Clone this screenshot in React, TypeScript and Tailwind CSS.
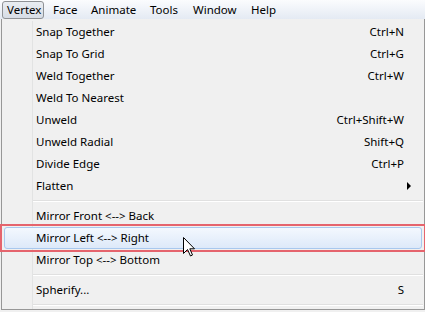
import React from "react";

type Item =
  | { kind: "item"; label: string; shortcut?: string; submenu?: boolean; active?: boolean }
  | { kind: "sep" };

const menuBar = [
  { label: "Face", w: "w-[38px]" },
  { label: "Animate", w: "w-[59px]" },
  { label: "Tools", w: "w-[43px]" },
  { label: "Window", w: "w-[58px]" },
  { label: "Help", w: "w-[40px]" },
];

const items: Item[] = [
  { kind: "item", label: "Snap Together", shortcut: "Ctrl+N" },
  { kind: "item", label: "Snap To Grid", shortcut: "Ctrl+G" },
  { kind: "item", label: "Weld Together", shortcut: "Ctrl+W" },
  { kind: "item", label: "Weld To Nearest" },
  { kind: "item", label: "Unweld", shortcut: "Ctrl+Shift+W" },
  { kind: "item", label: "Unweld Radial", shortcut: "Shift+Q" },
  { kind: "item", label: "Divide Edge", shortcut: "Ctrl+P" },
  { kind: "item", label: "Flatten", submenu: true },
  { kind: "sep" },
  { kind: "item", label: "Mirror Front <--> Back" },
  { kind: "item", label: "Mirror Left <--> Right", active: true },
  { kind: "item", label: "Mirror Top <--> Bottom" },
  { kind: "sep" },
  { kind: "item", label: "Spherify...", shortcut: "S" },
  { kind: "sep" },
];

function Cursor() {
  return (
    <svg
      className="absolute left-[183px] top-[237px]"
      width="13"
      height="20"
      viewBox="0 0 13 20"
    >
      <path
        d="M0.5 0.5 L0.5 16.5 L4.5 12.5 L7.5 19 L9.5 18 L6.8 11.8 L11.5 11.8 Z"
        fill="#fff"
        stroke="#000"
        strokeWidth="1"
        strokeLinejoin="miter"
      />
    </svg>
  );
}

export default function App() {
  return (
    <div
      className="relative h-[312px] w-[425px] overflow-hidden bg-[#f0f0f0] text-[11.5px] text-black"
      style={{ fontFamily: '"Noto Sans", "Open Sans", sans-serif' }}
    >
      <div className="flex h-[19px] items-center bg-gradient-to-b from-[#fbfcfe] to-[#e4eaf3] pl-[2px]">
        <div className="mr-[2px] flex h-[18px] w-[42px] items-center rounded-[3px] border border-[#8f9296] bg-gradient-to-b from-[#e9edf2] to-[#d7dde6] pl-[4px] leading-none">
          Vertex
        </div>
        {menuBar.map((m) => (
          <div key={m.label} className={`flex h-[18px] items-center pl-[7px] leading-none ${m.w}`}>
            {m.label}
          </div>
        ))}
      </div>

      <div className="ml-[1px] w-[424px] border border-t-0 border-[#979797] bg-[#f0f0f0] px-[1px] pt-[2px]">
        <div className="relative flex flex-col">
          <div className="absolute bottom-0 left-[29px] top-0 w-[2px] border-l border-[#e2e3e3]" />
          {items.map((it, i) =>
            it.kind === "sep" ? (
              <div key={i} className="flex h-[8px] items-center pl-[30px]">
                <div className="h-[2px] w-full border-t border-[#e0e0e0] border-b border-b-white" />
              </div>
            ) : (
              <div
                key={i}
                className={
                  it.active
                    ? "relative h-[22px] outline-2 outline-offset-[1px] outline-[#e5646d]"
                    : "relative h-[22px]"
                }
              >
                {it.active && (
                  <div className="absolute inset-x-[1px] inset-y-0 rounded-[3px] border border-[#a8c8ee] bg-gradient-to-b from-[#f3f8fe] to-[#dde9f9]" />
                )}
                <div className="relative flex h-full items-center pl-[33px] pr-[19px]">
                  <span className="flex-1 whitespace-nowrap">{it.label}</span>
                  {it.shortcut && <span className="whitespace-nowrap">{it.shortcut}</span>}
                  {it.submenu && (
                    <svg width="5" height="8" viewBox="0 0 5 8" className="mr-[-8px]">
                      <path d="M0 0 L4 4 L0 8 Z" fill="#000" />
                    </svg>
                  )}
                </div>
              </div>
            )
          )}
        </div>
      </div>
      <Cursor />
    </div>
  );
}
